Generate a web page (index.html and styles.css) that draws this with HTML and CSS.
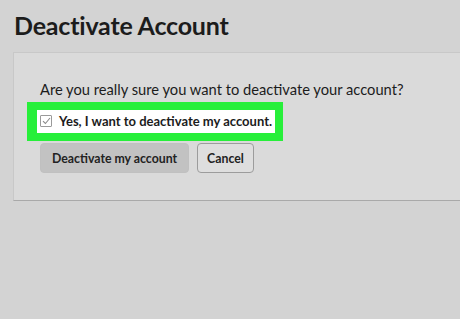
FILE: index.html
```html
<!DOCTYPE html>
<html lang="en">
<head>
    <meta charset="UTF-8">
    <meta name="viewport" content="width=device-width, initial-scale=1.0">
    <title>Deactivate Account</title>
    <link rel="stylesheet" href="styles.css">
</head>
<body>
    <div class="page">
        <h1 class="title">Deactivate Account</h1>

        <div class="card">
            <p class="question">Are you really sure you want to deactivate your account?</p>

            <label class="confirm-row">
                <span class="checkbox">
                    <svg width="9" height="8" viewBox="0 0 9 8">
                        <path d="M1 4.2 L3.4 6.5 L8 1" fill="none" stroke="#8a8a8a" stroke-width="1.1"/>
                    </svg>
                </span>
                Yes, I want to deactivate my account.
            </label>

            <div class="actions">
                <button class="btn btn-primary">Deactivate my account</button>
                <button class="btn btn-cancel">Cancel</button>
            </div>
        </div>
    </div>
</body>
</html>
```

FILE: styles.css
```css
body {
    font-family: 'Lato', 'Liberation Sans', sans-serif;
    background-color: #d3d3d3;
    color: #1c1c1c;
    margin: 0;
    overflow: hidden;
}

.page {
    padding: 10px 0 0 13px;
}

.title {
    font-size: 25px;
    font-weight: 700;
    line-height: 30px;
    margin: 0 0 12px 1px;
    letter-spacing: -0.2px;
}

.card {
    background-color: #dadada;
    border: 1px solid #c8c8c8;
    border-bottom-color: #a9a9a9;
    margin-right: -20px;
    padding: 27px 0 27px 26px;
}

.question {
    font-size: 14.7px;
    line-height: 18px;
    margin: 0 0 4px 0;
}

.confirm-row {
    display: inline-flex;
    align-items: center;
    gap: 7px;
    margin-left: -13px;
    padding: 3px 3px 4px 3px;
    background-color: #fff;
    border: 8px solid #27ef3a;
    border-left-width: 10px;
    font-size: 13px;
    font-weight: 700;
    line-height: 16px;
}

.checkbox {
    display: flex;
    align-items: center;
    justify-content: center;
    width: 10px;
    height: 10px;
    border: 1px solid #9a9a9a;
    border-radius: 1px;
    background-color: #fff;
}

.actions {
    display: flex;
    gap: 8px;
    margin-top: 2px;
}

.btn {
    font-family: inherit;
    font-size: 12.3px;
    font-weight: 700;
    color: #222;
    height: 30px;
    padding: 0 11px;
    border-radius: 4px;
    cursor: pointer;
}

.btn-primary {
    background-color: #c2c2c2;
    border: 1px solid #c0c0c0;
}

.btn-cancel {
    background-color: #dedede;
    border: 1px solid #9c9c9c;
    padding: 0 9px;
}
```
